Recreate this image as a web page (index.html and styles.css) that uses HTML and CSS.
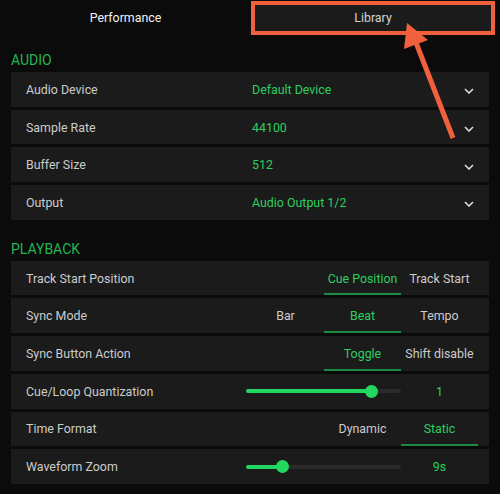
FILE: index.html
```html
<!DOCTYPE html>
<html>
<head>
<meta charset="utf-8">
<link rel="stylesheet" href="styles.css">
</head>
<body>
<div class="page">
  <div class="tabs">
    <div class="tab tab-active">Performance</div>
    <div class="tab tab-library">Library</div>
  </div>

  <div class="section">
    <div class="section-title">AUDIO</div>
    <div class="row">
      <div class="label label-wide">Audio Device</div>
      <div class="value">Default Device</div>
      <svg class="chev" width="10" height="6" viewBox="0 0 10 6"><path d="M1 1 L5 5 L9 1" /></svg>
    </div>
    <div class="row">
      <div class="label label-wide">Sample Rate</div>
      <div class="value">44100</div>
      <svg class="chev" width="10" height="6" viewBox="0 0 10 6"><path d="M1 1 L5 5 L9 1" /></svg>
    </div>
    <div class="row">
      <div class="label label-wide">Buffer Size</div>
      <div class="value">512</div>
      <svg class="chev" width="10" height="6" viewBox="0 0 10 6"><path d="M1 1 L5 5 L9 1" /></svg>
    </div>
    <div class="row">
      <div class="label label-wide">Output</div>
      <div class="value">Audio Output 1/2</div>
      <svg class="chev" width="10" height="6" viewBox="0 0 10 6"><path d="M1 1 L5 5 L9 1" /></svg>
    </div>
  </div>

  <div class="section">
    <div class="section-title section-title-play">PLAYBACK</div>
    <div class="row row-ctl">
      <div class="label">Track Start Position</div>
      <div class="seg">
        <div class="opt sel">Cue Position</div>
        <div class="opt">Track Start</div>
      </div>
    </div>
    <div class="row row-ctl">
      <div class="label">Sync Mode</div>
      <div class="seg">
        <div class="opt">Bar</div>
        <div class="opt sel">Beat</div>
        <div class="opt">Tempo</div>
      </div>
    </div>
    <div class="row row-ctl">
      <div class="label">Sync Button Action</div>
      <div class="seg">
        <div class="opt sel">Toggle</div>
        <div class="opt">Shift disable</div>
      </div>
    </div>
    <div class="row row-ctl">
      <div class="label">Cue/Loop Quantization</div>
      <div class="slider">
        <div class="track"><div class="fill" style="width:125px"></div><div class="thumb" style="left:125px"></div></div>
      </div>
      <div class="opt slider-val">1</div>
    </div>
    <div class="row row-ctl">
      <div class="label">Time Format</div>
      <div class="seg">
        <div class="opt">Dynamic</div>
        <div class="opt sel">Static</div>
      </div>
    </div>
    <div class="row row-ctl">
      <div class="label">Waveform Zoom</div>
      <div class="slider">
        <div class="track"><div class="fill" style="width:36px"></div><div class="thumb" style="left:36px"></div></div>
      </div>
      <div class="opt slider-val">9s</div>
    </div>
  </div>

  <div class="highlight"></div>
  <svg class="arrow" width="500" height="494" viewBox="0 0 500 494">
    <line x1="415" y1="40" x2="453" y2="138" />
    <polygon points="407,23 404,49 428,40" />
  </svg>
</div>
</body>
</html>
```

FILE: styles.css
```css
html, body {
  margin: 0;
  padding: 0;
  background: #0b0b0b;
}
body {
  width: 500px;
  height: 494px;
  overflow: hidden;
  font-family: Roboto, "Liberation Sans", sans-serif;
  font-size: 12.4px;
  color: #cdcdcd;
}
.page {
  position: relative;
  width: 500px;
  height: 494px;
}
.tabs {
  display: flex;
  height: 36px;
  padding: 1px 5px 1px 0;
  box-sizing: border-box;
}
.tab {
  display: flex;
  align-items: center;
  justify-content: center;
  height: 33px;
}
.tab-active {
  flex: 0 0 251px;
  color: #f2f2f2;
}
.tab-library {
  flex: 1;
  background: #1b1b1b;
  color: #d2d2d2;
}
.section {
  padding: 0 11px;
}
.section-title {
  height: 36px;
  display: flex;
  align-items: flex-end;
  padding-bottom: 4px;
  box-sizing: border-box;
  line-height: 16px;
  font-size: 14px;
  color: #22b552;
}
.section-title-play {
  height: 38px;
}
.row {
  display: flex;
  align-items: center;
  height: 34.7px;
  margin-bottom: 3px;
  background: #1b1b1b;
  padding: 0 14px 0 15px;
  box-sizing: border-box;
}
.row-ctl {
  padding-right: 11px;
  align-items: stretch;
}
.label {
  flex: 1;
  color: #cbcbcb;
  display: flex;
  align-items: center;
}
.label-wide {
  flex: 0 0 226px;
}
.value {
  flex: 1;
  color: #2ccf5f;
}
.chev {
  margin-top: 4px;
  margin-right: 1px;
}
.chev path {
  fill: none;
  stroke: #dcdcdc;
  stroke-width: 1.6;
}
.seg {
  display: flex;
}
.opt {
  width: 77px;
  display: flex;
  align-items: center;
  justify-content: center;
  box-sizing: border-box;
  border-bottom: 2px solid transparent;
  padding-top: 2px;
  color: #cbcbcb;
  white-space: nowrap;
}
.opt.sel {
  color: #2ccf5f;
  border-bottom-color: #1f8a43;
}
.slider-val {
  color: #2ccf5f;
}
.slider {
  width: 155px;
  display: flex;
  align-items: center;
}
.track {
  position: relative;
  width: 155px;
  height: 4px;
  border-radius: 2px;
  background: #2a2a2a;
}
.fill {
  height: 4px;
  border-radius: 2px;
  background: #22d861;
}
.thumb {
  position: absolute;
  top: 50%;
  width: 13px;
  height: 13px;
  margin: -6.5px 0 0 -6.5px;
  border-radius: 50%;
  background: #22d861;
}
.highlight {
  position: absolute;
  left: 251px;
  top: 1px;
  width: 244px;
  height: 34px;
  border: 4px solid #f1603d;
  box-sizing: border-box;
}
.arrow {
  position: absolute;
  left: 0;
  top: 0;
}
.arrow line {
  stroke: #f1603d;
  stroke-width: 5;
}
.arrow polygon {
  fill: #f1603d;
}
```
